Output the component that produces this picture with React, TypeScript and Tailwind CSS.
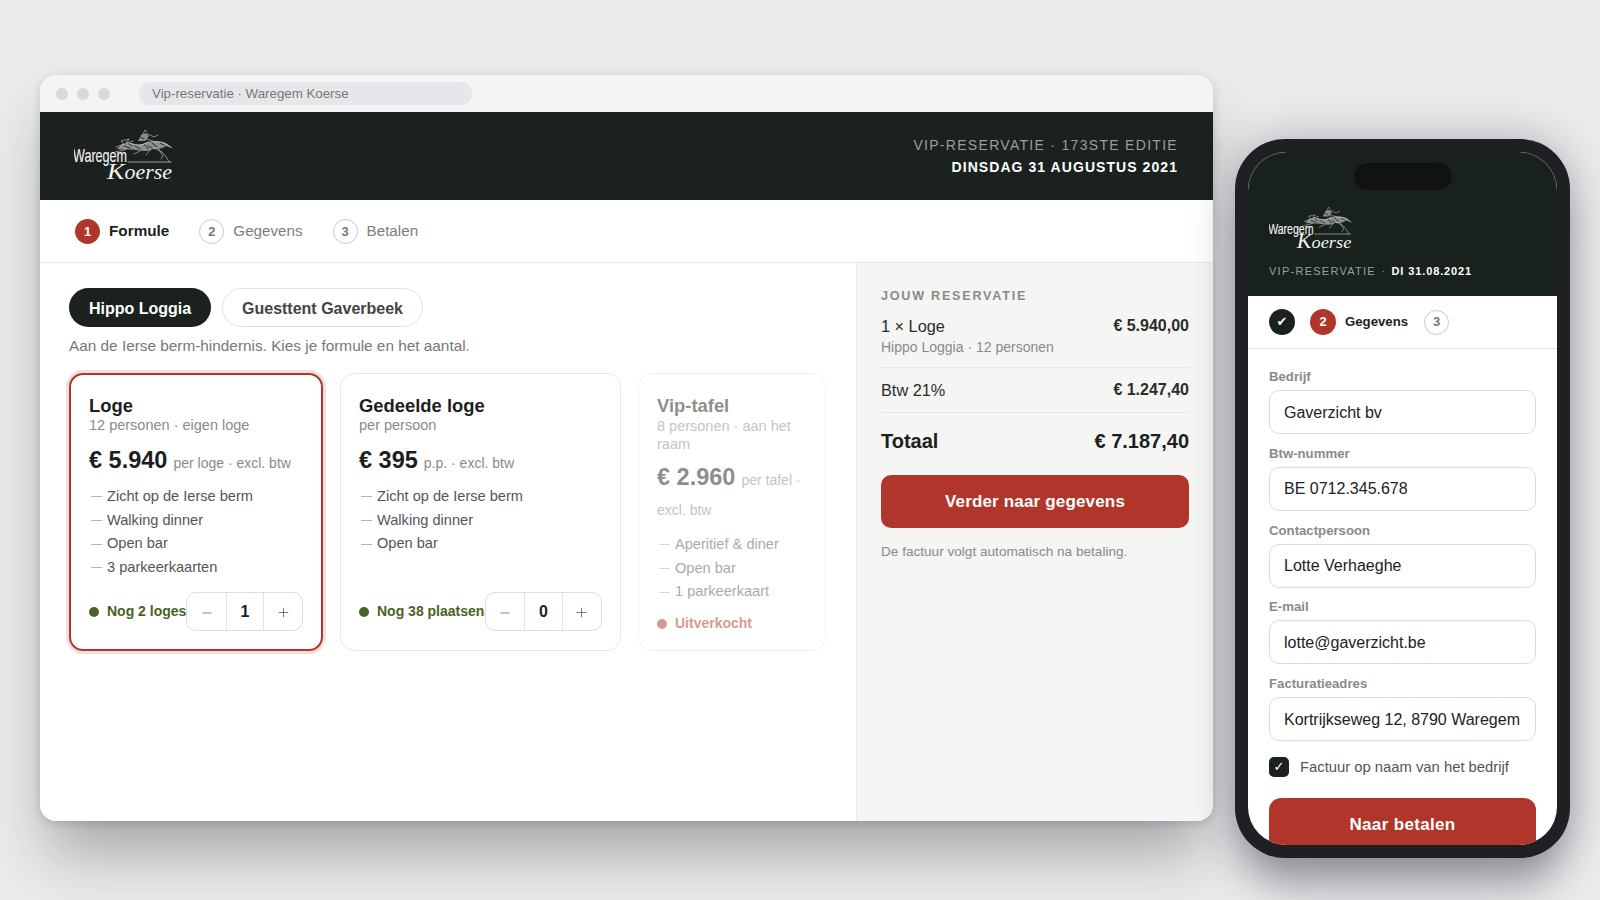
import React from 'react';
import { Minus, Plus } from 'lucide-react';

// Logo: horse sketch + two lines of real text
function Logo({ className }: { className: string }) {
  return (
    <svg viewBox="0 0 100 54" className={className} fill="none">
      <g fill="#e8e8e6" opacity="0.55">
        <path d="M43 20 C47 15 52 13 57 14 C63 16 68 16 73 13 C80 11 87 12 92 14 L98 19 L92 17 C88 20 83 20 79 20 C74 23 68 22 62 21 C57 20 50 21 43 20 Z" />
        <path d="M64 12 L67 6 L72 4 L75 7 L71 12 Z" />
      </g>
      <g stroke="#1a211e" strokeWidth="0.9" strokeLinecap="round">
        <path d="M50 17 L56 19 M60 16 L66 20 M70 15 L74 20 M78 14 L83 18 M86 14 L90 16 M66 8 L70 10 M55 15 L58 17 M74 17 L78 19" />
      </g>
      <g stroke="#f2f2f0" strokeWidth="0.5" strokeLinecap="round" strokeLinejoin="round">
        <path d="M39 24 C43 21 48 23 52 20 M42 18 L50 15 L47 12 L55 10 L52 14 L59 12" />
        <path d="M69 5 L71 1 L73 3 M74 5 L80 8 L84 6 M72 10 L79 12 M56 14 C62 17 68 17 74 13 M80 13 C86 12 92 14 98 19" />
        <path d="M80 19 L88 23 L93 29 L95 33 M84 19 L89 27 L87 30 M76 21 L72 26 M66 22 L60 25" />
        <path d="M54 33 L97 33" strokeWidth="0.6" />
      </g>
      <text x="-1" y="33" fill="#f4f4f2" stroke="#f4f4f2" strokeWidth="0.15" fontSize="18.5" textLength="54" lengthAdjust="spacingAndGlyphs" fontFamily="'Liberation Sans',sans-serif">Waregem</text>
      <text x="33" y="50" fill="#f4f4f2" fontSize="20" textLength="65" lengthAdjust="spacingAndGlyphs" fontStyle="italic" fontFamily="'Liberation Serif',serif"><tspan fontSize="24">K</tspan>oerse</text>
    </svg>
  );
}

function Step({ n, label, active }: { n: number; label: string; active?: boolean }) {
  return (
    <div className="flex items-center gap-[9px]">
      <span className={active
        ? 'w-[25px] h-[25px] rounded-full bg-[#b0352a] text-white text-[13px] font-bold flex items-center justify-center'
        : 'w-[25px] h-[25px] rounded-full border border-[#c9c9c9] text-[#777] text-[13px] font-bold flex items-center justify-center'}>
        {n}
      </span>
      <span className={active ? 'text-[15.3px] font-bold text-[#1b1f1d]' : 'text-[15.2px] text-[#7d7d7d]'}>{label}</span>
    </div>
  );
}

function Stepper({ value }: { value: number }) {
  return (
    <div className="flex h-[39px] w-[117px] shrink-0 border border-[#dddddb] rounded-[10px] text-[#1b1f1d]">
      <span className="w-[39px] pt-[2px] flex items-center justify-center text-[#666]"><Minus size={14} strokeWidth={1.4} /></span>
      <span className="w-[39px] flex items-center justify-center border-x border-[#e2e2e0] text-[16px] font-bold">{value}</span>
      <span className="w-[39px] pt-[2px] flex items-center justify-center text-[#666]"><Plus size={15} strokeWidth={1.4} /></span>
    </div>
  );
}

function Features({ items, className }: { items: string[]; className: string }) {
  return (
    <ul className={`flex flex-col ${className}`}>
      {items.map((f) => (
        <li key={f} className="h-[23.7px] flex items-center text-[14.6px] text-[#555]">
          <span className="w-[11px] h-px bg-[#b5b5b5] mr-[5px] ml-[2px]" />
          {f}
        </li>
      ))}
    </ul>
  );
}

function Status({ label }: { label: string }) {
  return (
    <div className="flex items-center gap-[8px] text-[14px] font-bold text-[#4a6322] whitespace-nowrap">
      <span className="w-[10px] h-[10px] rounded-full bg-[#4a6322]" />
      {label}
    </div>
  );
}

function Field({ label, value }: { label: string; value: string }) {
  return (
    <div className="flex flex-col">
      <label className="h-[28px] pt-[5px] text-[13.2px] font-bold text-[#8a8a8a]">{label}</label>
      <div className="h-[44px] border border-[#dcdcda] rounded-[10px] px-[14px] pt-[1px] flex items-center text-[16px] text-[#222] whitespace-nowrap">{value}</div>
    </div>
  );
}

export default function App() {
  return (
    <div className="h-[900px] w-[1600px] overflow-hidden flex items-start bg-[#ebebed] font-['Liberation_Sans',Arial,sans-serif]">

      {/* --- DESKTOP BROWSER --- */}
      <div className="ml-[40px] mt-[75px] w-[1173px] h-[746px] rounded-[16px] overflow-hidden flex flex-col bg-white shadow-[0_2px_8px_rgba(20,25,30,0.16),0_40px_60px_-8px_rgba(40,46,50,0.36)]">
        <div className="h-[37px] shrink-0 bg-[#f3f4f6] flex items-center pl-[16px]">
          <span className="w-[12px] h-[12px] rounded-full bg-[#d9d9dc]" />
          <span className="w-[12px] h-[12px] rounded-full bg-[#d9d9dc] ml-[9px]" />
          <span className="w-[12px] h-[12px] rounded-full bg-[#d9d9dc] ml-[9px]" />
          <div className="ml-[29px] w-[333px] h-[23px] rounded-full bg-[#e6e7ea] pl-[13px] flex items-center text-[13.3px] text-[#777]">
            Vip-reservatie · Waregem Koerse
          </div>
        </div>

        <header className="h-[88px] shrink-0 bg-[#1a211e] flex items-center justify-between pl-[34px] pr-[35px]">
          <Logo className="w-[100px] h-[54px]" />
          <div className="text-right">
            <p className="text-[14px] leading-[22px] tracking-[1.3px] text-[#9a9f9c]">VIP-RESERVATIE · 173STE EDITIE</p>
            <p className="text-[14px] leading-[22px] font-bold tracking-[1.06px] text-white">DINSDAG 31 AUGUSTUS 2021</p>
          </div>
        </header>

        <nav className="h-[63px] pt-[1px] shrink-0 border-b border-[#e7e7e5] flex items-center gap-[30px] pl-[35px]">
          <Step n={1} label="Formule" active />
          <Step n={2} label="Gegevens" />
          <Step n={3} label="Betalen" />
        </nav>

        <div className="flex-1 flex min-h-0">
          <main className="w-[816px] pl-[29px] pt-[25px]">
            <div className="flex gap-[11px]">
              <button className="h-[39px] w-[142px] pt-[2px] rounded-full bg-[#1a211e] text-white text-[16px] font-bold">Hippo Loggia</button>
              <button className="h-[39px] w-[201px] pt-[2px] rounded-full border border-[#e2e2e0] text-[#444] text-[16px] font-bold">Guesttent Gaverbeek</button>
            </div>
            <p className="mt-[10px] text-[15.35px] leading-[18px] text-[#777]">Aan de Ierse berm-hindernis. Kies je formule en het aantal.</p>

            <div className="mt-[18px] grid grid-cols-[254px_281px_188px] gap-[17px] h-[278px]">
              {/* Loge */}
              <div className="rounded-[14px] border-2 border-[#b0352a] shadow-[0_0_0_3px_rgba(176,53,42,0.16)] px-[18px] pt-[20px] pb-[18px] flex flex-col">
                <h3 className="text-[18.4px] leading-[22px] font-bold text-[#1b1f1d]">Loge</h3>
                <p className="text-[14.5px] leading-[17px] text-[#8a8a8a]">12 personen · eigen loge</p>
                <div className="mt-[11px] flex items-baseline gap-[6px] whitespace-nowrap">
                  <span className="text-[23.5px] leading-[30px] font-bold text-[#1b1f1d]">€ 5.940</span>
                  <span className="text-[14px] text-[#8a8a8a]">per loge · excl. btw</span>
                </div>
                <Features className="mt-[10px]" items={['Zicht op de Ierse berm', 'Walking dinner', 'Open bar', '3 parkeerkaarten']} />
                <div className="mt-auto flex items-center justify-between">
                  <Status label="Nog 2 loges" />
                  <Stepper value={1} />
                </div>
              </div>

              {/* Gedeelde loge */}
              <div className="rounded-[14px] border border-[#e7e7e5] px-[18px] pt-[21px] pb-[19px] flex flex-col">
                <h3 className="text-[18.4px] leading-[22px] font-bold text-[#1b1f1d]">Gedeelde loge</h3>
                <p className="text-[14.5px] leading-[17px] text-[#8a8a8a]">per persoon</p>
                <div className="mt-[11px] flex items-baseline gap-[6px] whitespace-nowrap">
                  <span className="text-[23.5px] leading-[30px] font-bold text-[#1b1f1d]">€ 395</span>
                  <span className="text-[14px] text-[#8a8a8a]">p.p. · excl. btw</span>
                </div>
                <Features className="mt-[10px]" items={['Zicht op de Ierse berm', 'Walking dinner', 'Open bar']} />
                <div className="mt-auto flex items-center justify-between">
                  <Status label="Nog 38 plaatsen" />
                  <Stepper value={0} />
                </div>
              </div>

              {/* Vip-tafel, sold out */}
              <div className="rounded-[14px] border border-[#f1f1f0] px-[18px] pt-[21px]">
                <div className="opacity-50">
                  <h3 className="text-[18.4px] leading-[22px] font-bold text-[#1b1f1d]">Vip-tafel</h3>
                  <p className="text-[14.5px] leading-[18px] text-[#8a8a8a]">8 personen · aan het raam</p>
                  <div className="mt-[9px] leading-[30px]">
                    <span className="text-[23.5px] font-bold text-[#1b1f1d]">€ 2.960</span>
                    <span className="text-[14px] text-[#8a8a8a] ml-[6px]">per tafel · excl. btw</span>
                  </div>
                  <Features className="mt-[8px]" items={['Aperitief & diner', 'Open bar', '1 parkeerkaart']} />
                  <div className="mt-[9px] flex items-center gap-[8px] text-[14px] font-bold text-[#b0352a]">
                    <span className="w-[10px] h-[10px] rounded-full bg-[#b0352a]" />
                    Uitverkocht
                  </div>
                </div>
              </div>
            </div>
          </main>

          <aside className="flex-1 bg-[#f5f5f3] border-l border-[#e9e9e7] pl-[24px] pr-[24px] pt-[26px]">
            <h2 className="text-[12.6px] leading-[14px] font-bold tracking-[0.14em] text-[#8a8a8a]">JOUW RESERVATIE</h2>
            <div className="mt-[12px] flex justify-between text-[16.3px] leading-[22px] text-[#2a2d2b]">
              <span>1 × Loge</span>
              <span className="font-bold text-[16px]">€ 5.940,00</span>
            </div>
            <p className="text-[14px] leading-[18px] mt-[1px] text-[#8a8a8a]">Hippo Loggia · 12 personen</p>
            <div className="mt-[11px] h-px bg-[#e6e6e4]" />
            <div className="mt-[11px] flex justify-between text-[16.3px] leading-[22px] text-[#2a2d2b]">
              <span>Btw 21%</span>
              <span className="font-bold text-[16px]">€ 1.247,40</span>
            </div>
            <div className="mt-[11px] h-px bg-[#e6e6e4]" />
            <div className="mt-[15px] flex justify-between text-[20px] leading-[26px] font-bold text-[#1b1f1d]">
              <span>Totaal</span>
              <span>€ 7.187,40</span>
            </div>
            <button className="mt-[21px] h-[53px] w-full rounded-[10px] bg-[#b0352a] text-white text-[17px] font-bold tracking-[0.01em]">Verder naar gegevens</button>
            <p className="mt-[16px] text-[13.6px] leading-[16px] text-[#8a8a8a]">De factuur volgt automatisch na betaling.</p>
          </aside>
        </div>
      </div>

      {/* --- PHONE --- */}
      <div className="relative ml-[22px] mt-[139px] w-[335px] h-[719px] shrink-0 rounded-[50px] bg-[#1f2024] p-[13px] shadow-[0_0_44px_rgba(30,35,45,0.3),0_36px_40px_-8px_rgba(30,35,45,0.34)]">
        <div className="relative h-full rounded-[38px] overflow-hidden bg-white flex flex-col">
          <span className="absolute top-[11px] left-[106px] w-[98px] h-[27px] rounded-full bg-[#111312]" />
          <span className="absolute top-0 left-0 w-[38px] h-[38px] rounded-tl-[38px] border-t border-l border-white/15" />
          <span className="absolute top-0 right-0 w-[38px] h-[38px] rounded-tr-[38px] border-t border-r border-white/15" />
          <div className="h-[144px] shrink-0 bg-[#18211c] pl-[21px]">
            <Logo className="w-[84px] h-[46px] mt-[54px]" />
            <p className="mt-[12px] text-[11px] leading-[14px] tracking-[0.115em] text-[#9a9f9c] whitespace-nowrap">
              VIP-RESERVATIE <span className="mx-[1px]">·</span> <span className="font-bold text-white tracking-[0.08em]">DI 31.08.2021</span>
            </p>
          </div>

          <div className="h-[53px] shrink-0 border-b border-[#e7e7e5] flex items-center pl-[21px]">
            <span className="w-[26px] h-[26px] rounded-full bg-[#1a211e] text-white text-[13px] flex items-center justify-center font-['DejaVu_Sans',sans-serif]">✔</span>
            <span className="ml-[15px] w-[26px] h-[26px] rounded-full bg-[#b0352a] text-white text-[13px] font-bold flex items-center justify-center">2</span>
            <span className="ml-[9px] text-[13.2px] font-bold text-[#1b1f1d]">Gegevens</span>
            <span className="ml-[16px] w-[25px] h-[25px] rounded-full border border-[#c9c9c9] text-[#777] text-[13px] font-bold flex items-center justify-center">3</span>
          </div>

          <div className="px-[21px] pt-[13px] flex flex-col gap-[4.8px]">
            <Field label="Bedrijf" value="Gaverzicht bv" />
            <Field label="Btw-nummer" value="BE 0712.345.678" />
            <Field label="Contactpersoon" value="Lotte Verhaeghe" />
            <Field label="E-mail" value="lotte@gaverzicht.be" />
            <Field label="Facturatieadres" value="Kortrijkseweg 12, 8790 Waregem" />
            <div className="mt-[10px] flex items-center gap-[11px]">
              <span className="w-[20px] h-[20px] rounded-[5px] bg-[#1a211e] text-white text-[13px] flex items-center justify-center font-['DejaVu_Sans',sans-serif]">✓</span>
              <span className="text-[14.8px] text-[#555]">Factuur op naam van het bedrijf</span>
            </div>
            <button className="mt-[15px] h-[54px] shrink-0 rounded-[12px] bg-[#b0352a] text-white text-[17px] font-bold tracking-[0.02em]">Naar betalen</button>
          </div>
        </div>
      </div>
    </div>
  );
}
